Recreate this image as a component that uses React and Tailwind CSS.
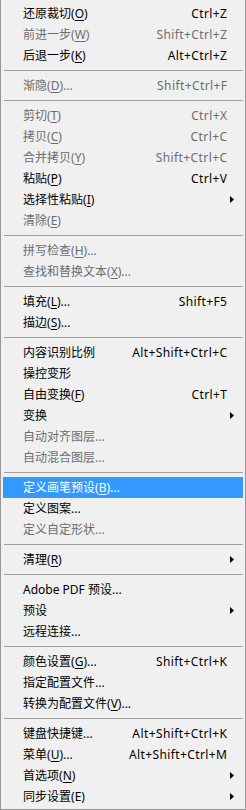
const items = [
  { t: "还原裁切", k: "O", s: "Ctrl+Z" },
  { t: "前进一步", k: "W", s: "Shift+Ctrl+Z", d: true },
  { t: "后退一步", k: "K", s: "Alt+Ctrl+Z" },
  "sep",
  { t: "渐隐", k: "D", e: true, s: "Shift+Ctrl+F", d: true },
  "sep",
  { t: "剪切", k: "T", s: "Ctrl+X", d: true },
  { t: "拷贝", k: "C", s: "Ctrl+C", d: true },
  { t: "合并拷贝", k: "Y", s: "Shift+Ctrl+C", d: true },
  { t: "粘贴", k: "P", s: "Ctrl+V" },
  { t: "选择性粘贴", k: "I", sub: true },
  { t: "清除", k: "E", d: true },
  "sep",
  { t: "拼写检查", k: "H", e: true, d: true },
  { t: "查找和替换文本", k: "X", e: true, d: true },
  "sep",
  { t: "填充", k: "L", e: true, s: "Shift+F5" },
  { t: "描边", k: "S", e: true },
  "sep",
  { t: "内容识别比例", s: "Alt+Shift+Ctrl+C" },
  { t: "操控变形" },
  { t: "自由变换", k: "F", s: "Ctrl+T" },
  { t: "变换", sub: true },
  { t: "自动对齐图层", e: true, d: true },
  { t: "自动混合图层", e: true, d: true },
  "sep",
  { t: "定义画笔预设", k: "B", e: true, active: true },
  { t: "定义图案", e: true },
  { t: "定义自定形状", e: true, d: true },
  "sep",
  { t: "清理", k: "R", sub: true },
  "sep",
  { t: "Adobe PDF 预设", e: true },
  { t: "预设", sub: true },
  { t: "远程连接", e: true },
  "sep",
  { t: "颜色设置", k: "G", e: true, s: "Shift+Ctrl+K" },
  { t: "指定配置文件", e: true },
  { t: "转换为配置文件", k: "V", e: true },
  "sep",
  { t: "键盘快捷键", e: true, s: "Alt+Shift+Ctrl+K" },
  { t: "菜单", k: "U", e: true, s: "Alt+Shift+Ctrl+M" },
  { t: "首选项", k: "N", sub: true },
  { t: "同步设置", k: "E", plain: true, sub: true },
];

function Arrow() {
  return (
    <svg width="4" height="7" viewBox="0 0 4 7" className="block">
      <path d="M0 0 L4 3.5 L0 7 Z" fill="currentColor" />
    </svg>
  );
}

function Row({ it }) {
  const color = it.active
    ? "bg-[#3399ff] text-white"
    : it.d
    ? "text-[#6d6d6d]"
    : "text-black";
  return (
    <div className={`mx-[2px] flex h-[21px] items-center pl-[20px] pr-[16px] ${color}`}>
      <span className="flex-1 whitespace-nowrap">
        {it.t}
        {it.k && (
          <>
            (
            {it.plain ? it.k : <span className="underline underline-offset-[2px]">{it.k}</span>}
            )
          </>
        )}
        {it.e && "..."}
      </span>
      {it.s && <span className="whitespace-nowrap tracking-[0.4px] -mr-[0.4px]">{it.s}</span>}
      {it.sub && (
        <span className={`-mr-[7px] ${it.d ? "text-[#6d6d6d]" : "text-black"}`}>
          <Arrow />
        </span>
      )}
    </div>
  );
}

export default function App() {
  return (
    <div className="flex h-[810px] w-[246px] flex-col border-x border-b border-[#979797] bg-[#f0f0f0] pt-[3px] font-['Noto_Sans','Noto_Sans_CJK_SC',sans-serif] text-[12px] leading-[21px]">
      {items.map((it, i) =>
        it === "sep" ? (
          <div key={i} className="py-[4px] pl-[3px] pr-[2px]">
            <div className="h-px bg-[#a0a0a0]" />
          </div>
        ) : (
          <Row key={i} it={it} />
        )
      )}
    </div>
  );
}
